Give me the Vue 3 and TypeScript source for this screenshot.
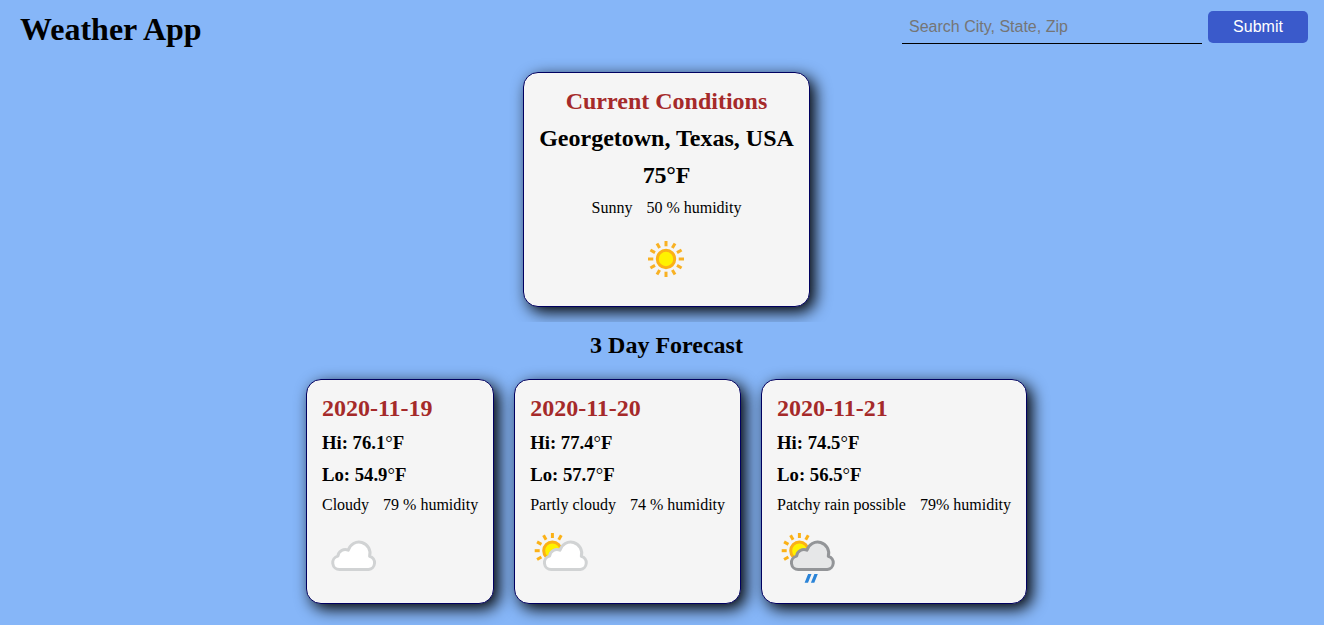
<script setup lang="ts">
import { ref } from 'vue'

interface ForecastDay {
  date: string
  hi: string
  lo: string
  condition: string
  humidity: string
  icon: 'cloudy' | 'partly' | 'rain'
}

const query = ref('')

const sunRays: number[] = Array.from({ length: 12 }, (_, i) => i * 30)
const partialRays: number[] = [-120, -90, -60, -30, 0, 30]
const cloudPath =
  'M21.4 45.5A6.8 6.8 0 0 1 19.6 32.1A7.4 7.4 0 0 1 30 26.2A11 11 0 0 1 51.3 32.2A6.8 6.8 0 0 1 50.3 45.5Z'

const days: ForecastDay[] = [
  { date: '2020-11-19', hi: '76.1', lo: '54.9', condition: 'Cloudy', humidity: '79 % humidity', icon: 'cloudy' },
  { date: '2020-11-20', hi: '77.4', lo: '57.7', condition: 'Partly cloudy', humidity: '74 % humidity', icon: 'partly' },
  { date: '2020-11-21', hi: '74.5', lo: '56.5', condition: 'Patchy rain possible', humidity: '79% humidity', icon: 'rain' },
]
</script>

<template>
  <div class="app">
    <header class="header">
      <h1>Weather App</h1>
      <form class="search" @submit.prevent>
        <input v-model="query" type="text" placeholder="Search City, State, Zip" />
        <button type="submit">Submit</button>
      </form>
    </header>

    <section class="current">
      <div class="card centered">
        <h2 class="accent">Current Conditions</h2>
        <h2>Georgetown, Texas, USA</h2>
        <h2 class="temperature">75°F</h2>
        <p><span class="condition">Sunny</span> <span>50 % humidity</span></p>
        <svg class="icon" viewBox="0 0 64 64">
          <g stroke="#f8b123" stroke-width="3">
            <line v-for="a in sunRays" :key="a" x1="32" y1="14" x2="32" y2="19.3" :transform="`rotate(${a} 32 32)`" />
          </g>
          <circle cx="32" cy="32" r="8.7" fill="#fff200" stroke="#fbb116" stroke-width="3" />
        </svg>
      </div>
    </section>

    <section class="forecast">
      <h2>3 Day Forecast</h2>
      <div class="days">
        <div v-for="day in days" :key="day.date" class="card">
          <h2 class="accent">{{ day.date }}</h2>
          <h3>Hi: {{ day.hi }}<span class="degree">°</span>F</h3>
          <h3>Lo: {{ day.lo }}<span class="degree">°</span>F</h3>
          <p><span class="condition">{{ day.condition }}</span> <span>{{ day.humidity }}</span></p>
          <svg class="icon" viewBox="0 0 64 64">
            <template v-if="day.icon !== 'cloudy'">
              <g stroke="#fbb116" stroke-width="3">
                <line v-for="a in partialRays" :key="a" x1="22.4" y1="9" x2="22.4" y2="14" :transform="`rotate(${a} 22.4 26.7)`" />
              </g>
              <circle cx="22.4" cy="26.7" r="8.7" fill="#fff200" stroke="#fbb116" stroke-width="3" />
            </template>
            <path
              :d="cloudPath"
              :fill="day.icon === 'rain' ? '#e6e7e8' : '#ffffff'"
              :stroke="day.icon === 'rain' ? '#939598' : '#d1d3d4'"
              stroke-width="3"
              stroke-linejoin="round"
              :transform="day.icon === 'cloudy' ? 'translate(-3.7 0)' : undefined"
            />
            <path v-if="day.icon === 'rain'" d="M31.1 50H34.5L31 58.8H27.6ZM37.4 50H40.8L37.3 58.8H33.9Z" fill="#2b84d8" />
          </svg>
        </div>
      </div>
    </section>
  </div>
</template>

<style>
body {
  margin: 0;
  background: #86b6f8;
}
</style>

<style scoped>
.app {
  height: 625px;
  overflow: hidden;
  font-family: "Liberation Serif", "Times New Roman", serif;
  font-size: 16px;
  color: #000;
  background: #86b6f8;
}
h1,
h2,
h3,
p {
  margin: 0;
}
.header {
  display: flex;
  justify-content: space-between;
  align-items: flex-start;
  height: 62px;
  box-sizing: border-box;
  padding: 11px 16px 0 20px;
}
h1 {
  font-size: 32px;
  line-height: 36px;
}
.search {
  display: flex;
  gap: 6px;
}
input {
  box-sizing: border-box;
  width: 300px;
  height: 33px;
  padding: 0 7px 1px;
  border: 0;
  border-bottom: 1px solid #000;
  outline: 0;
  background: transparent;
  font: 16px "Liberation Sans", Arial, sans-serif;
}
input::placeholder {
  color: #757575;
}
button {
  width: 100px;
  height: 32px;
  padding: 0;
  border: 0;
  border-radius: 5px;
  background: #3a5acb;
  color: #fff;
  font: 16px "Liberation Sans", Arial, sans-serif;
}
.current {
  display: flex;
  justify-content: center;
  height: 260px;
  box-sizing: border-box;
  padding: 10px 0 0 9px;
}
.card {
  display: flex;
  flex-direction: column;
  gap: 10px;
  align-self: flex-start;
  padding: 15px;
  border: 1px solid #000060;
  border-radius: 15px;
  background: #f5f5f5;
  box-shadow: 5px 5px 16px #000;
}
.centered {
  align-items: center;
}
h2 {
  font-size: 24px;
  line-height: 27px;
}
h3 {
  font-size: 18.72px;
  line-height: 22px;
}
p {
  line-height: 18px;
  white-space: nowrap;
}
.accent {
  color: #a52a2a;
}
.temperature {
  letter-spacing: -0.2px;
}
.degree {
  font-weight: 400;
}
.condition {
  margin-right: 10px;
}
.icon {
  width: 64px;
  height: 64px;
}
.forecast {
  position: relative;
  display: flex;
  flex-direction: column;
  align-items: center;
  gap: 20px;
  padding: 10px 0 20px 9px;
  background: #86b6f8;
}
.days {
  display: flex;
  gap: 20px;
}
</style>
